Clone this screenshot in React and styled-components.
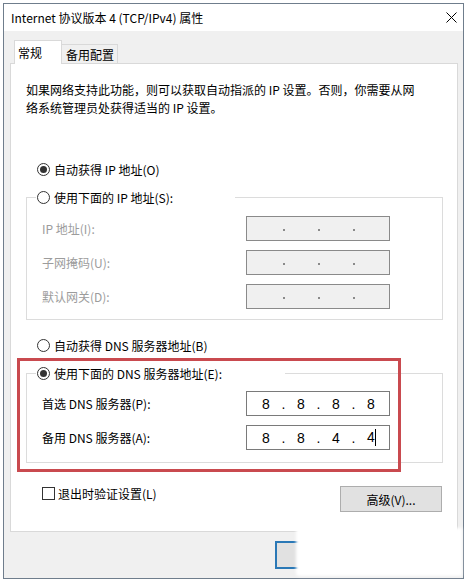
import React from "react";
import styled, { createGlobalStyle } from "styled-components";

const Global = createGlobalStyle`
  html, body { margin: 0; padding: 0; background: #fff; }
  body {
    font-family: "Noto Sans CJK SC", "Noto Sans", sans-serif;
    font-size: 12px;
    color: #000;
  }
  #root { width: 468px; height: 583px; overflow: hidden; }
`;

const Window = styled.div`
  position: relative;
  box-sizing: border-box;
  margin: 3px 0 0 3px;
  width: 461px;
  height: 576px;
  border: 1px solid #6f7d8c;
  background: #f0f0f0;
  display: flex;
  flex-direction: column;
`;

const TitleBar = styled.div`
  height: 27px;
  flex: none;
  background: #fff;
  display: flex;
  align-items: center;
  justify-content: space-between;
  padding-left: 7px;
`;

const Title = styled.div`
  font-size: 12px;
  line-height: 16px;
  white-space: nowrap;
`;

const Close = styled.div`
  width: 23px;
  height: 27px;
  display: flex;
  align-items: center;
  justify-content: center;
`;

const Body = styled.div`
  padding: 9px 5px 0 6px;
  display: flex;
  flex-direction: column;
`;

const TabStrip = styled.div`
  display: flex;
  align-items: flex-end;
  padding-left: 4px;
  height: 24px;
  margin-bottom: -1px;
  position: relative;
  z-index: 1;
`;

const Tab = styled.div`
  box-sizing: border-box;
  height: ${(p) => (p.$active ? 24 : 20)}px;
  width: ${(p) => p.$w}px;
  background: ${(p) => (p.$active ? "#fff" : "#f0f0f0")};
  border: 1px solid #d9d9d9;
  border-bottom: ${(p) => (p.$active ? "none" : "1px solid #d9d9d9")};
  border-left: ${(p) => (p.$active ? "1px solid #d9d9d9" : "none")};
  padding-left: ${(p) => p.$pl}px;
  display: flex;
  align-items: center;
  padding-top: ${(p) => (p.$active ? 0 : 1)}px;
  line-height: 16px;
  white-space: nowrap;
`;

const Panel = styled.div`
  box-sizing: border-box;
  height: 469px;
  border: 1px solid #d9d9d9;
  background: #fff;
  padding: 17px 14px 0 15px;
  display: flex;
  flex-direction: column;
`;

const Description = styled.p`
  margin: 0;
  line-height: 18px;
`;

const RadioRow = styled.div`
  display: flex;
  align-items: center;
  height: 20px;
  padding-left: 11px;
  margin-top: ${(p) => p.$mt}px;
  gap: 4px;
  white-space: nowrap;
`;

const Circle = styled.span`
  box-sizing: border-box;
  width: 13px;
  height: 13px;
  border-radius: 50%;
  border: 1px solid #333;
  background: #fff;
  display: flex;
  align-items: center;
  justify-content: center;
  flex: none;
  &::after {
    content: "";
    width: 7px;
    height: 7px;
    border-radius: 50%;
    background: ${(p) => (p.$on ? "#333" : "transparent")};
  }
`;

const Group = styled.fieldset`
  margin: ${(p) => p.$mt}px 0 0 0;
  min-width: 0;
  border: 1px solid #dcdcdc;
  padding: ${(p) => p.$pt}px 52px ${(p) => p.$pb}px 15px;
`;

const Legend = styled.legend`
  box-sizing: border-box;
  width: ${(p) => p.$w}px;
  height: 20px;
  padding: 0 0 0 1px;
  margin-left: -6px;
  display: flex;
  align-items: center;
  gap: 4px;
  white-space: nowrap;
`;

const Rows = styled.div`
  display: grid;
  grid-template-columns: 1fr 144px;
  row-gap: 9px;
  align-items: center;
`;

const Label = styled.span`
  color: ${(p) => (p.$disabled ? "#9c9c9c" : "#000")};
  white-space: nowrap;
`;

const IpBox = styled.div`
  box-sizing: border-box;
  height: 25px;
  width: 144px;
  border: 1px solid ${(p) => (p.$disabled ? "#8a8a8a" : "#7a7a7a")};
  background: ${(p) => (p.$disabled ? "#f0f0f0" : "#fff")};
  padding: 0 4px 0 5px;
  display: flex;
  align-items: center;
  font-family: "Liberation Sans", sans-serif;
  font-size: 14px;
  line-height: 16px;
`;

const Octet = styled.span`
  width: 28px;
  text-align: center;
`;

const Dot = styled.span`
  width: 7px;
  text-align: center;
  color: #000;
`;

const GreyDot = styled.span`
  width: 2px;
  height: 2px;
  margin: 2px 2.5px 0;
  background: #8a8a8a;
`;

const Caret = styled.span`
  display: inline-block;
  width: 1px;
  height: 17px;
  margin-right: -1px;
  background: #000;
  vertical-align: -4px;
`;

const BottomRow = styled.div`
  display: flex;
  justify-content: space-between;
  align-items: flex-start;
  margin-top: 20px;
`;

const CheckLabel = styled.div`
  display: flex;
  align-items: center;
  height: 20px;
  padding-left: 16px;
  gap: 3px;
  white-space: nowrap;
`;

const Box = styled.span`
  box-sizing: border-box;
  width: 13px;
  height: 13px;
  border: 1px solid #333;
  background: #fff;
`;

const Button = styled.div`
  box-sizing: border-box;
  width: ${(p) => p.$w}px;
  height: ${(p) => p.$h}px;
  margin-top: ${(p) => p.$mt || 0}px;
  margin-right: ${(p) => p.$mr || 0}px;
  background: #e1e1e1;
  border: ${(p) => (p.$default ? "2px solid #2a78b6" : "1px solid #adadad")};
  display: flex;
  align-items: center;
  justify-content: center;
  white-space: nowrap;
`;

const Footer = styled.div`
  display: flex;
  justify-content: flex-end;
  gap: 8px;
  padding: 9px 25px 0 0;
`;

const RedMark = styled.div`
  position: absolute;
  left: 13px;
  top: 354px;
  width: 384px;
  height: 114px;
  box-sizing: border-box;
  border: 3px solid #c94a4f;
  pointer-events: none;
`;

const Smudge = styled.div`
  position: absolute;
  left: 292px;
  top: 524px;
  width: 166px;
  height: 48px;
  background: #fff;
  filter: blur(1.5px);
  border-radius: 3px 0 0 3px;
`;

const Radio = ({ on }) => <Circle $on={on} />;

const IpField = ({ values, disabled, caret }) => (
  <IpBox $disabled={disabled}>
    {[0, 1, 2, 3].map((i) => (
      <React.Fragment key={i}>
        <Octet>
          {values ? values[i] : ""}
          {caret && i === 3 ? <Caret /> : null}
        </Octet>
        {i < 3 ? disabled ? <GreyDot /> : <Dot>.</Dot> : null}
      </React.Fragment>
    ))}
  </IpBox>
);

export default function App() {
  return (
    <>
      <Global />
      <Window>
        <TitleBar>
          <Title>Internet 协议版本 4 (TCP/IPv4) 属性</Title>
          <Close>
            <svg width="11" height="11" viewBox="0 0 11 11">
              <path d="M0.5 0.5 L10.5 10.5 M10.5 0.5 L0.5 10.5" stroke="#000" strokeWidth="1" fill="none" />
            </svg>
          </Close>
        </TitleBar>
        <Body>
          <TabStrip>
            <Tab $active $w={48} $pl={3}>常规</Tab>
            <Tab $w={56} $pl={4}>备用配置</Tab>
          </TabStrip>
          <Panel>
            <Description>
              如果网络支持此功能，则可以获取自动指派的 IP 设置。否则，你需要从网
              <br />
              络系统管理员处获得适当的 IP 设置。
            </Description>
            <RadioRow $mt={42}>
              <Radio on />
              自动获得 IP 地址(O)
            </RadioRow>
            <Group $mt={8} $pt={9} $pb={10}>
              <Legend $w={199}>
                <Radio />
                使用下面的 IP 地址(S):
              </Legend>
              <Rows>
                <Label $disabled>IP 地址(I):</Label>
                <IpField disabled />
                <Label $disabled>子网掩码(U):</Label>
                <IpField disabled />
                <Label $disabled>默认网关(D):</Label>
                <IpField disabled />
              </Rows>
            </Group>
            <RadioRow $mt={15}>
              <Radio />
              自动获得 DNS 服务器地址(B)
            </RadioRow>
            <Group $mt={8} $pt={8} $pb={12}>
              <Legend $w={249}>
                <Radio on />
                使用下面的 DNS 服务器地址(E):
              </Legend>
              <Rows>
                <Label>首选 DNS 服务器(P):</Label>
                <IpField values={["8", "8", "8", "8"]} />
                <Label>备用 DNS 服务器(A):</Label>
                <IpField values={["8", "8", "4", "4"]} caret />
              </Rows>
            </Group>
            <BottomRow>
              <CheckLabel>
                <Box />
                退出时验证设置(L)
              </CheckLabel>
              <Button $w={102} $h={26} $mt={3} $mr={1}>高级(V)...</Button>
            </BottomRow>
          </Panel>
          <Footer>
            <Button $default $w={75} $h={28}>确定</Button>
            <Button $w={75} $h={28}>取消</Button>
          </Footer>
        </Body>
        <RedMark />
        <Smudge />
      </Window>
    </>
  );
}
